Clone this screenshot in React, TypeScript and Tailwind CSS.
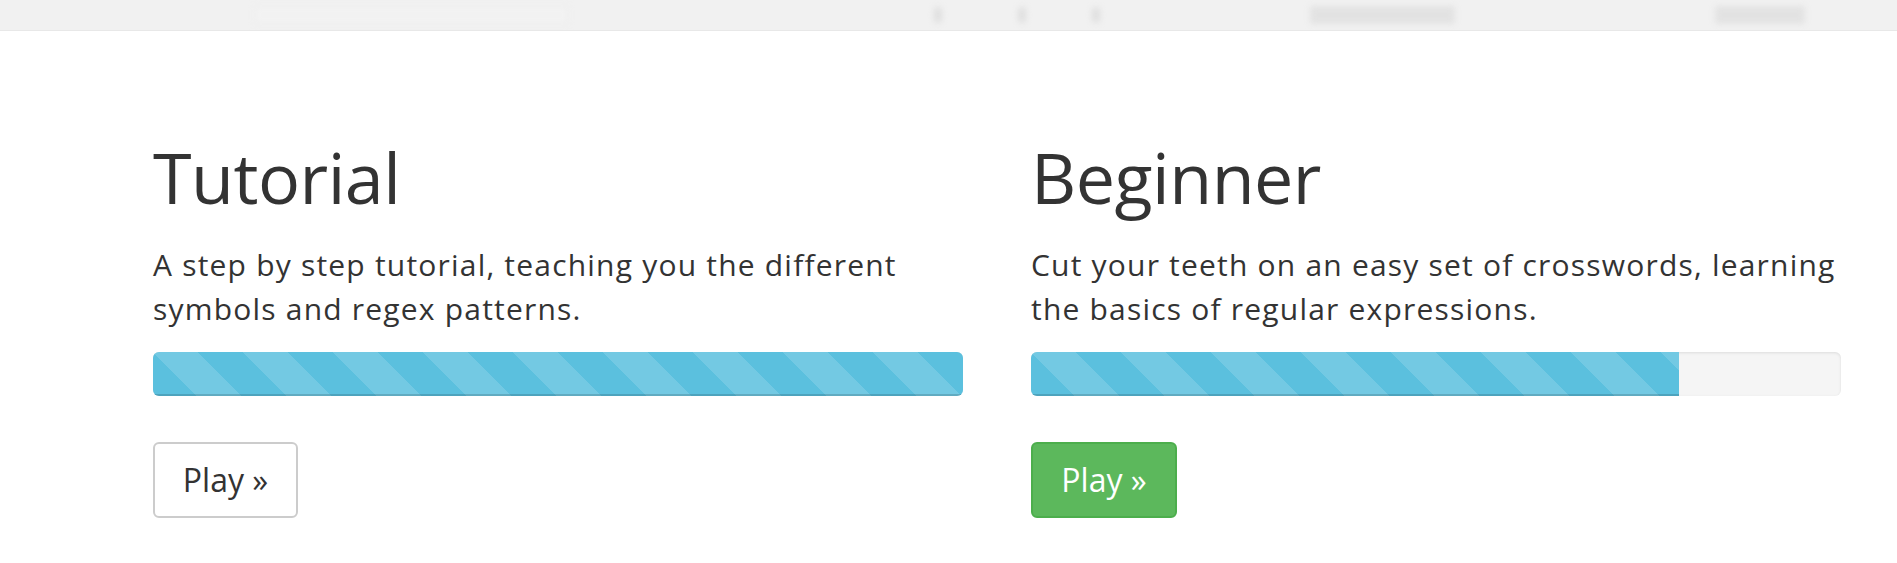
import React from "react";

function Bar({ pct }: { pct: number }) {
  return (
    <div className="h-[44px] w-full rounded-[6px] bg-[#f5f5f5] overflow-hidden shadow-[inset_0_1px_3px_rgba(0,0,0,0.1)]">
      <div
        className="h-full bg-[#5bc0de] bg-[linear-gradient(45deg,rgba(255,255,255,0.15)_25%,transparent_25%,transparent_50%,rgba(255,255,255,0.15)_50%,rgba(255,255,255,0.15)_75%,transparent_75%,transparent)] bg-[length:90px_90px] shadow-[inset_0_-2px_0_rgba(0,0,0,0.15)]"
        style={{ width: `${pct}%` }}
      />
    </div>
  );
}

function Col({
  title,
  text,
  pct,
  primary,
}: {
  title: string;
  text: string;
  pct: number;
  primary?: boolean;
}) {
  return (
    <div className="flex flex-col">
      <h1 className="text-[70px] leading-[1.1] font-normal text-[#333] tracking-[-0.5px]">{title}</h1>
      <p className="mt-[27px] text-[30px] leading-[44px] text-[#333] tracking-[1.2px]">{text}</p>
      <div className="mt-[21px]">
        <Bar pct={pct} />
      </div>
      <div className="mt-[46px]">
        <button
          className={
            primary
              ? "h-[76px] w-[146px] rounded-[6px] border-2 border-[#4cae4c] bg-[#5cb85c] text-white text-[32px]"
              : "h-[76px] w-[145px] rounded-[6px] border-2 border-[#ccc] bg-white text-[#333] text-[32px]"
          }
        >
          Play »
        </button>
      </div>
    </div>
  );
}

export default function App() {
  return (
    <div
      className="min-h-[563px] w-[1897px] bg-white overflow-hidden"
      style={{ fontFamily: '"Open Sans", "Noto Sans", sans-serif' }}
    >
      <div className="h-[31px] bg-[#f1f1f1] border-b border-[#e8e8e8] relative overflow-hidden">
        <div className="flex items-center h-full blur-[3px] opacity-50">
          <div className="ml-[254px] h-[20px] w-[315px] border border-[#ddd] bg-[#f4f4f4]" />
          <div className="ml-[365px] h-[16px] w-[8px] rounded bg-[#ccc]" />
          <div className="ml-[76px] h-[16px] w-[8px] rounded bg-[#ccc]" />
          <div className="ml-[66px] h-[16px] w-[8px] rounded bg-[#ccc]" />
          <div className="ml-[210px] h-[18px] w-[145px] bg-[#d4d4d4]" />
          <div className="ml-[260px] h-[18px] w-[90px] bg-[#d4d4d4]" />
        </div>
      </div>
      <div className="pl-[153px] pt-[108px]">
        <div className="grid grid-cols-[810px_810px] gap-x-[68px]">
          <Col
            title="Tutorial"
            text="A step by step tutorial, teaching you the different symbols and regex patterns."
            pct={100}
          />
          <Col
            title="Beginner"
            text="Cut your teeth on an easy set of crosswords, learning the basics of regular expressions."
            pct={80}
            primary
          />
        </div>
      </div>
    </div>
  );
}
